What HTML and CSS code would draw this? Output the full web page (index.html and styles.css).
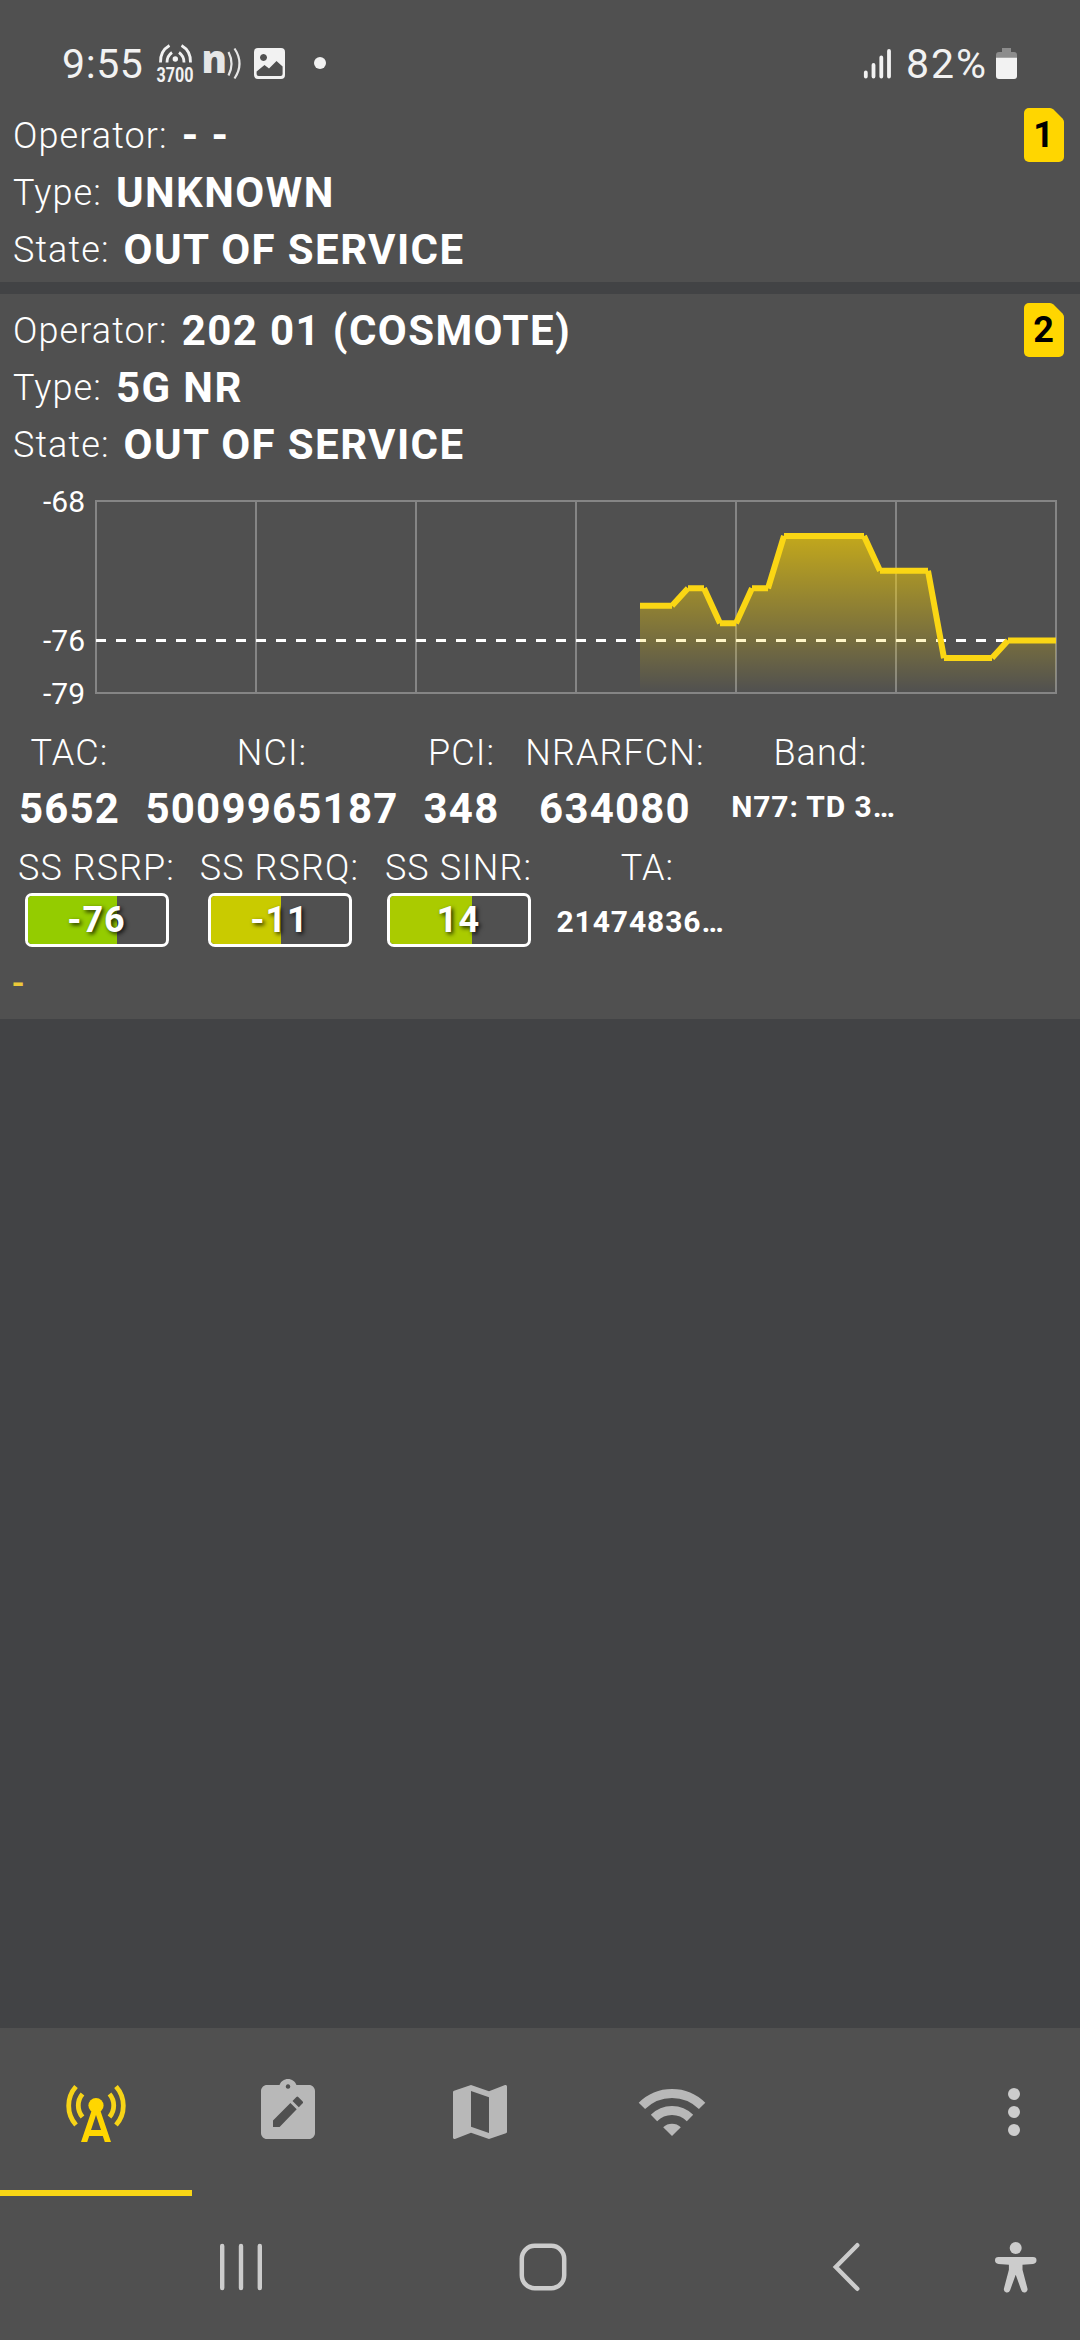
FILE: index.html
```html
<!DOCTYPE html>
<html lang="en">
<head>
    <meta charset="UTF-8">
    <meta name="viewport" content="width=device-width, initial-scale=1.0">
    <title>Cell Info</title>
    <link rel="stylesheet" href="styles.css">
</head>
<body>
    <div class="status-bar">
        <span class="clock">9:55</span>
        <svg class="status-icons" width="172" height="44" viewBox="155 42 172 44">
            <!-- band monitor -->
            <g fill="none" stroke="#f2f2f2" stroke-width="2.8">
                <path d="M160.5 62.500Q160 51 169.500 45.500M190.500 62.500Q191 51 181.500 45.500"/>
                <path d="M167 62.500Q167 56 172 52.500M184 62.500Q184 56 179 52.500"/>
            </g>
            <circle cx="175.300" cy="59" r="2.700" fill="#f2f2f2"/>
            <text class="band-text" x="156.500" y="81.500" textLength="37" lengthAdjust="spacingAndGlyphs">3700</text>
            <!-- n)) -->
            <text class="n-text" x="201.500" y="73">n</text>
            <g fill="none" stroke="#e6e6e6" stroke-width="2.200">
                <path d="M228.500 52Q234.500 63.500 228.500 75.500"/>
                <path d="M234.500 48.500Q244.500 63.500 234.500 78.500"/>
            </g>
            <!-- picture -->
            <path fill="#f2f2f2" fill-rule="evenodd" d="M258 48h23a4 4 0 0 1 4 4v23a4 4 0 0 1-4 4h-23a4 4 0 0 1-4-4V52a4 4 0 0 1 4-4zM256.600 71.500V74a2 2 0 0 0 2 2h22a2 2 0 0 0 2-2v-7.500L276.500 61 269 68.500 264.500 65zM263.500 54a3.500 3.500 0 1 0 .01 0z"/>
            <circle cx="320" cy="63" r="6" fill="#f2f2f2"/>
        </svg>
        <svg class="signal-icon" width="30" height="34" viewBox="864 47 30 34">
            <path stroke="#f2f2f2" stroke-width="3.800" stroke-linecap="round" d="M866.800 72.500v4M874.500 65v11.500M882.300 57.500v19M890 51v25.500"/>
        </svg>
        <span class="battery-level">82%</span>
        <svg width="22" height="34" viewBox="997 47 22 34">
            <path fill="#8c8c8c" d="M1003 48h9v4h3a3 3 0 0 1 3 3v3h-21v-3a3 3 0 0 1 3-3h3z"/>
            <path fill="#f2f2f2" d="M997 57.700h21V76a3 3 0 0 1-3 3h-15a3 3 0 0 1-3-3z"/>
        </svg>
    </div>

    <div class="card">
        <div class="info">
            <div class="info-row"><span class="label">Operator:</span><span class="value">- -</span></div>
            <div class="info-row"><span class="label">Type:</span><span class="value">UNKNOWN</span></div>
            <div class="info-row"><span class="label">State:</span><span class="value">OUT OF SERVICE</span></div>
        </div>
        <svg class="sim" width="40" height="54" viewBox="0 0 40 54">
            <path fill="#ffd600" d="M5 0h21q2 0 3.500 1.500L38.500 10.500Q40 12 40 14v35a5 5 0 0 1-5 5H5a5 5 0 0 1-5-5V5a5 5 0 0 1 5-5z"/>
            <text class="sim-number" x="19.500" y="39">1</text>
        </svg>
    </div>

    <div class="card">
        <div class="info">
            <div class="info-row"><span class="label">Operator:</span><span class="value">202 01 (COSMOTE)</span></div>
            <div class="info-row"><span class="label">Type:</span><span class="value">5G NR</span></div>
            <div class="info-row"><span class="label">State:</span><span class="value">OUT OF SERVICE</span></div>
        </div>
        <svg class="sim" width="40" height="54" viewBox="0 0 40 54">
            <path fill="#ffd600" d="M5 0h21q2 0 3.500 1.500L38.500 10.500Q40 12 40 14v35a5 5 0 0 1-5 5H5a5 5 0 0 1-5-5V5a5 5 0 0 1 5-5z"/>
            <text class="sim-number" x="19.500" y="39">2</text>
        </svg>

        <svg class="chart" width="1080" height="243" viewBox="0 477 1080 243">
            <defs>
                <linearGradient id="area" gradientUnits="userSpaceOnUse" x1="0" y1="501" x2="0" y2="693">
                    <stop offset="0" stop-color="#ffd600" stop-opacity="0.8"/>
                    <stop offset="1" stop-color="#ffd600" stop-opacity="0"/>
                </linearGradient>
            </defs>
            <path class="grid" d="M95 501H1057M95 693H1057M96 501V693M256 501V693M416 501V693M576 501V693M736 501V693M896 501V693M1056 501V693"/>
            <path class="average" d="M96 640.500H1056"/>
            <path fill="url(#area)" d="M640 605.700H672L688 588.300H704L720 623.200H736L752 588.300H768L784 535.900H864L880 570.800H928L944 658.100H992L1008 640.600H1056V693H640z"/>
            <path class="line" d="M640 605.700H672M672 605.700L688 588.300M688 588.300H704M704 588.300L720 623.200M720 623.200H736M736 623.200L752 588.300M752 588.300H768M768 588.300L784 535.900M784 535.900H864M864 535.900L880 570.800M880 570.800H928M928 570.800L944 658.100M944 658.100H992M992 658.100L1008 640.600M1008 640.600H1056"/>
            <text class="axis" x="85" y="512">-68</text>
            <text class="axis" x="85" y="651">-76</text>
            <text class="axis" x="85" y="704">-79</text>
        </svg>

        <div class="metrics">
            <div class="metric tac"><span class="label">TAC:</span><span class="value">5652</span></div>
            <div class="metric nci"><span class="label">NCI:</span><span class="value">5009965187</span></div>
            <div class="metric pci"><span class="label">PCI:</span><span class="value">348</span></div>
            <div class="metric arfcn"><span class="label">NRARFCN:</span><span class="value">634080</span></div>
            <div class="metric wide"><span class="label">Band:</span><span class="value small">N77: TD 3…</span></div>
        </div>
        <div class="metrics">
            <div class="metric rsrp">
                <span class="label">SS RSRP:</span>
                <div class="gauge"><div class="fill" style="width: 64.5%; background: #94cc00"></div><span class="gauge-text">-76</span></div>
            </div>
            <div class="metric rsrq">
                <span class="label">SS RSRQ:</span>
                <div class="gauge"><div class="fill" style="width: 51%; background: #c9cb00"></div><span class="gauge-text">-11</span></div>
            </div>
            <div class="metric sinr">
                <span class="label">SS SINR:</span>
                <div class="gauge"><div class="fill" style="width: 59.5%; background: #aacb00"></div><span class="gauge-text">14</span></div>
            </div>
            <div class="metric wide"><span class="label">TA:</span><span class="value small">21474836…</span></div>
        </div>
        <div class="note">-</div>
    </div>

    <div class="tabs">
        <div class="tab active">
            <svg width="72" height="72" viewBox="60 2076 72 72">
                <circle cx="96" cy="2105.500" r="7.600" fill="#ffd600"/>
                <path fill="#ffd600" fill-rule="evenodd" d="M92.500 2108h7L111 2142h-6.200l-2-6H89.200l-2 6H81zM96 2115l-5 15h10z"/>
                <g fill="none" stroke="#f7d417" stroke-width="4.800">
                    <path d="M109.500 2094A17.800 17.800 0 0 1 109.500 2117M82.500 2094A17.800 17.800 0 0 0 82.500 2117"/>
                    <path d="M116 2086.500A29 29 0 0 1 116 2125M76 2086.500A29 29 0 0 0 76 2125"/>
                </g>
            </svg>
        </div>
        <div class="tab">
            <svg width="72" height="72" viewBox="0 0 24 24">
                <path fill="#b8b8b8" fill-rule="evenodd" d="M5 3h4.180C9.600 1.840 10.700 1 12 1s2.400.84 2.820 2H19c1.100 0 2 .9 2 2v14c0 1.100-.9 2-2 2H5c-1.100 0-2-.9-2-2V5c0-1.100.9-2 2-2zM12 2.750a.75.75 0 1 0 .01 0zM7 17h2.200l5.700-5.900-2.100-2.100L7 14.800zM13.500 8.300l2.100 2.100 1.300-1.300q.3-.3 0-.6l-1.500-1.500q-.3-.3-.6 0z"/>
            </svg>
        </div>
        <div class="tab">
            <svg width="72" height="72" viewBox="0 0 24 24">
                <path fill="#b8b8b8" fill-rule="evenodd" d="M20.500 3l-.16.030L15 5.100 9 3 3.360 4.900c-.21.070-.36.25-.36.48V20.500c0 .28.22.5.5.5l.16-.030L9 18.900l6 2.100 5.640-1.900c.21-.070.36-.25.36-.48V3.500c0-.28-.22-.5-.5-.5zM15 19l-6-2.110V5l6 2.110V19z"/>
            </svg>
        </div>
        <div class="tab">
            <svg width="72" height="72" viewBox="636 2076 72 72">
                <path fill="none" stroke="#b8b8b8" stroke-width="9" d="M641.900 2105.900A42.600 42.600 0 0 1 702.100 2105.900M654 2118A25.500 25.500 0 0 1 690 2118"/>
                <path fill="#b8b8b8" d="M672 2136L663.200 2127.200A13 13 0 0 1 680.800 2127.200z"/>
            </svg>
        </div>
        <svg class="overflow" width="12" height="48" viewBox="0 0 12 48">
            <g fill="#ccc"><circle cx="6" cy="6" r="6"/><circle cx="6" cy="24" r="6"/><circle cx="6" cy="42" r="6"/></g>
        </svg>
    </div>

    <div class="nav-bar">
        <svg width="44" height="48" viewBox="219 2243 44 48">
            <path stroke="#ccc" stroke-width="4.400" stroke-linecap="round" d="M222.200 2246v42M241 2246v42M259.800 2246v42"/>
        </svg>
        <svg width="48" height="48" viewBox="0 0 48 48">
            <rect x="2.800" y="2.800" width="42.400" height="42.400" rx="13" fill="none" stroke="#ccc" stroke-width="4.500"/>
        </svg>
        <svg width="28" height="50" viewBox="832 2242 28 50">
            <path fill="none" stroke="#ccc" stroke-width="4.400" stroke-linecap="round" d="M857.300 2245.200L835.800 2267L857.300 2288.800"/>
        </svg>
        <svg width="42" height="52" viewBox="995 2242 42 52">
            <g fill="#ccc">
                <circle cx="1015.700" cy="2249" r="6"/>
                <path d="M998.500 2258h34.500q3.500 0 3.500 3.300t-3.500 3.600l-10.500.8v5l5 19q.5 3-2.300 3.700t-3.900-2.200l-5.600-15.500-5.600 15.500q-1.100 2.900-3.900 2.200t-2.300-3.700l5-19v-5l-10.400-.8q-3.500-.3-3.500-3.600t3.500-3.300z"/>
            </g>
        </svg>
    </div>
</body>
</html>
```

FILE: styles.css
```css
body {
    font-family: Roboto, "Liberation Sans", sans-serif;
    background-color: #424345;
    color: white;
    margin: 0;
    width: 1080px;
    height: 2340px;
    display: flex;
    flex-direction: column;
    overflow: hidden;
}
svg {
    display: block;
    flex: none;
    overflow: visible;
}
.status-bar {
    height: 99px;
    box-sizing: border-box;
    padding: 28px 62px 0 62px;
    background: #505050;
    color: #f2f2f2;
    display: flex;
    align-items: center;
}
.clock, .battery-level {
    font-size: 41px;
    line-height: 40px;
}
.clock {
    width: 93px;
    letter-spacing: 0.6px;
}
.band-text {
    font-size: 21px;
    font-weight: bold;
    fill: #f2f2f2;
}
.n-text {
    font-family: "Open Sans", sans-serif;
    font-size: 38px;
    font-weight: 800;
    fill: #e6e6e6;
}
.signal-icon {
    margin-left: auto;
    margin-right: 13px;
}
.battery-level {
    width: 90px;
    letter-spacing: 2px;
}
.card {
    background: #505050;
    padding-top: 12px;
    margin-bottom: 12px;
    position: relative;
}
.info {
    margin-top: -4px;
    padding-left: 13px;
    padding-bottom: 4px;
}
.info-row {
    height: 57px;
    display: flex;
    align-items: center;
    gap: 14px;
}
.info .value {
    letter-spacing: 1.4px;
}
.label {
    font-size: 36px;
    font-weight: 300;
    letter-spacing: 1.1px;
    line-height: 48px;
}
.value {
    font-size: 42px;
    font-weight: bold;
    letter-spacing: 1.2px;
    line-height: 50px;
    white-space: nowrap;
}
.sim {
    position: absolute;
    top: 9px;
    right: 16px;
}
.sim-number {
    font-size: 36px;
    font-weight: bold;
    text-anchor: middle;
}
.grid {
    fill: none;
    stroke: #858585;
    stroke-width: 2;
}
.average {
    fill: none;
    stroke: white;
    stroke-width: 3;
    stroke-dasharray: 10 10;
}
.line {
    fill: none;
    stroke: #fad614;
    stroke-width: 6;
}
.axis {
    font-size: 30px;
    fill: white;
    text-anchor: end;
}
.metrics {
    display: flex;
    height: 115px;
    padding-left: 6px;
}
.metric {
    display: flex;
    flex-direction: column;
    align-items: center;
    padding-top: 9px;
    box-sizing: border-box;
}
.tac { width: 127px; }
.nci { width: 278px; }
.pci { width: 101px; }
.arfcn { width: 206px; }
.wide { width: 205px; }
.rsrp { width: 181px; }
.rsrq { width: 185px; }
.sinr { width: 173px; }
.metric .value {
    line-height: 64px;
}
.metric .small {
    font-size: 30px;
    line-height: 60px;
    letter-spacing: 0.9px;
    padding-right: 14px;
}
.gauge {
    width: 144px;
    height: 54px;
    margin-top: 1px;
    box-sizing: border-box;
    border: 3px solid white;
    border-radius: 7px;
    display: grid;
    overflow: hidden;
}
.fill, .gauge-text {
    grid-area: 1 / 1;
}
.gauge-text {
    font-size: 36px;
    font-weight: bold;
    letter-spacing: 1px;
    line-height: 48px;
    text-align: center;
    text-shadow: 2px 2px 4px rgba(0,0,0,0.8);
}
.note {
    height: 69px;
    padding-left: 12px;
    color: #ecc93a;
    font-size: 36px;
    font-weight: 500;
    line-height: 68px;
}
.tabs {
    height: 168px;
    margin-top: auto;
    background: #505050;
    display: flex;
    align-items: center;
}
.tab {
    width: 192px;
    height: 168px;
    box-sizing: border-box;
    padding-top: 48px;
    display: flex;
    flex-direction: column;
    align-items: center;
}
.active {
    border-bottom: 6px solid #f9d616;
}
.overflow {
    margin-left: auto;
    margin-right: 60px;
}
.nav-bar {
    height: 144px;
    box-sizing: border-box;
    padding-bottom: 2px;
    background: #505050;
    display: grid;
    grid-template-columns: 300px 267px 293px 177px;
    justify-items: end;
    align-items: center;
}
.nav-bar svg:first-child {
    margin-right: 37px;
}
```
